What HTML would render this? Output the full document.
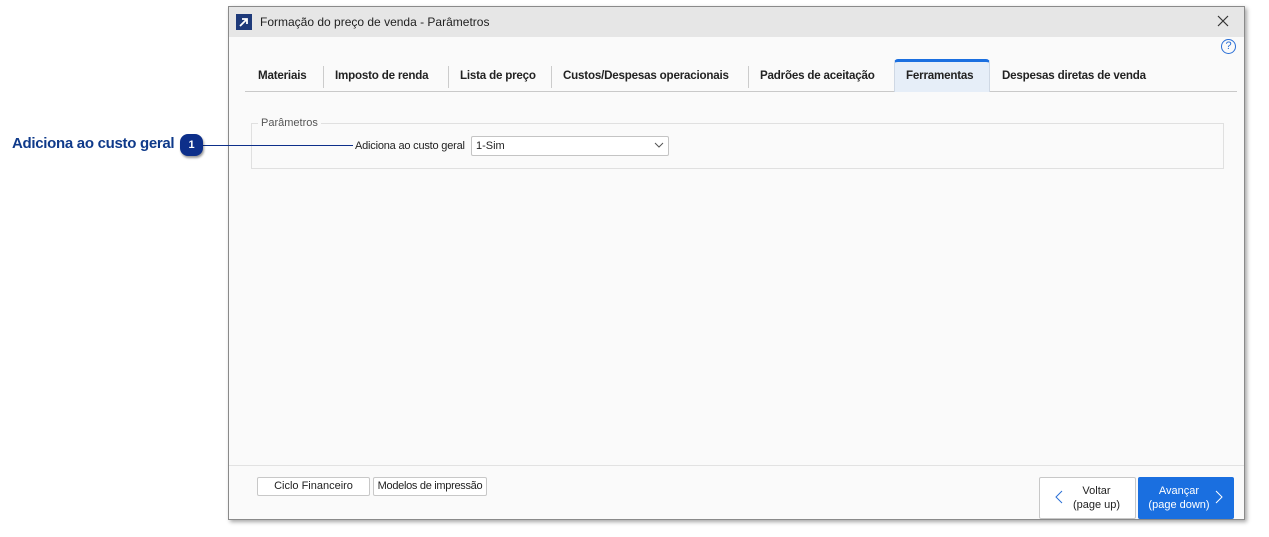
<!DOCTYPE html>
<html><head><meta charset="utf-8"><style>
*{box-sizing:border-box;margin:0;padding:0}
body{width:1269px;height:537px;background:#fff;position:relative;overflow:hidden;font-family:"Liberation Sans",sans-serif;font-size:11px;color:#222}
.abs{position:absolute}
.win{left:228px;top:6px;width:1017px;height:514px;border:1px solid #8a8a8a;background:#fafafa;box-shadow:2px 2px 4px rgba(0,0,0,.35)}
.title{left:0;top:0;width:1015px;height:30px;background:#e6e6e6}
.tab{top:56px;height:26px;font-weight:bold;font-size:11.6px;line-height:26px;color:#222;white-space:nowrap;letter-spacing:-0.2px}
.sep{top:59px;width:1px;height:22px;background:#ccc}
.btn{border:1px solid #c8c8c8;background:#fff;border-radius:2px;text-align:center;font-size:11px}
</style></head><body>
<div class="abs win">
 <div class="abs title"></div>
 <div class="abs" style="left:7px;top:7px;width:16px;height:16px;background:#1e3a7a"></div>
 <svg class="abs" style="left:7px;top:7px" width="16" height="16"><path d="M4 12 L11 5 M6 5 H11 V10" stroke="#fff" stroke-width="1.8" fill="none"/></svg>
 <div class="abs" style="left:31px;top:8px;font-size:12px;color:#222">Formação do preço de venda - Parâmetros</div>
 <svg class="abs" style="left:988px;top:8px" width="12" height="12"><path d="M1 1L11 11M11 1L1 11" stroke="#333" stroke-width="1.2"/></svg>
 <div class="abs" style="left:992px;top:32px;width:15px;height:15px;border:1.3px solid #2a6fd6;border-radius:50%;color:#2a6fd6;font-size:11px;text-align:center;line-height:13px">?</div>
 <div class="abs" style="left:16px;top:84px;width:992px;height:1px;background:#c9c9c9"></div>
 <div class="abs" style="left:665px;top:52px;width:96px;height:33px;background:#e6eef8;border:1px solid #cfd8e4;border-bottom:none;border-top:3px solid #1a6fe0;border-radius:4px 4px 0 0"></div>
 <div class="abs tab" style="left:29px">Materiais</div>
 <div class="abs sep" style="left:94px"></div>
 <div class="abs tab" style="left:106px">Imposto de renda</div>
 <div class="abs sep" style="left:219px"></div>
 <div class="abs tab" style="left:231px">Lista de preço</div>
 <div class="abs sep" style="left:322px"></div>
 <div class="abs tab" style="left:334px">Custos/Despesas operacionais</div>
 <div class="abs sep" style="left:519px"></div>
 <div class="abs tab" style="left:531px">Padrões de aceitação</div>
 <div class="abs tab" style="left:677px">Ferramentas</div>
 <div class="abs tab" style="left:773px">Despesas diretas de venda</div>
 <div class="abs" style="left:22px;top:116px;width:973px;height:46px;border:1px solid #e0e0e0"></div>
 <div class="abs" style="left:29px;top:110px;background:#fafafa;padding:0 3px;color:#555">Parâmetros</div>
 <div class="abs" style="left:126px;top:133px;color:#222;letter-spacing:-0.2px">Adiciona ao custo geral</div>
 <div class="abs" style="left:242px;top:129px;width:198px;height:20px;border:1px solid #c4c4c4;border-radius:2px;background:#fff;padding-left:4px;line-height:18px">1-Sim</div>
 <svg class="abs" style="left:425px;top:135px" width="10" height="7"><path d="M1 1L5 5L9 1" stroke="#555" fill="none"/></svg>
 <div class="abs" style="left:0;top:458px;width:1015px;height:1px;background:#e2e2e2"></div>
 <div class="abs btn" style="left:28px;top:470px;width:113px;height:19px;line-height:17px">Ciclo Financeiro</div>
 <div class="abs btn" style="left:144px;top:470px;width:114px;height:19px;line-height:17px;letter-spacing:-0.3px">Modelos de impressão</div>
 <div class="abs btn" style="left:810px;top:470px;width:97px;height:42px"></div>
 <div class="abs" style="left:835px;top:477px;width:65px;text-align:center;line-height:14px">Voltar<br>(page up)</div>
 <svg class="abs" style="left:826px;top:483px" width="8" height="14"><path d="M7 1L1 7L7 13" stroke="#2a6fd6" fill="none"/></svg>
 <div class="abs" style="left:909px;top:470px;width:96px;height:42px;background:#1a6fe0;border-radius:2px"></div>
 <div class="abs" style="left:913px;top:477px;width:74px;text-align:center;line-height:14px;color:#fff">Avançar<br>(page down)</div>
 <svg class="abs" style="left:986px;top:483px" width="8" height="14"><path d="M1 1L7 7L1 13" stroke="#fff" fill="none"/></svg>
</div>
<div class="abs" style="left:12px;top:135px;font-size:15px;font-weight:bold;color:#0f3a8a;letter-spacing:-0.3px;white-space:nowrap">Adiciona ao custo geral</div>
<div class="abs" style="left:203px;top:145px;width:150px;height:1px;background:#0d2f8a"></div>
<div class="abs" style="left:180px;top:134px;width:23px;height:22px;border-radius:8px;background:#0d2f8a;box-shadow:1px 2px 2px rgba(0,0,0,.4);color:#fff;font-weight:bold;font-size:11px;text-align:center;line-height:22px">1</div>
</body></html>
